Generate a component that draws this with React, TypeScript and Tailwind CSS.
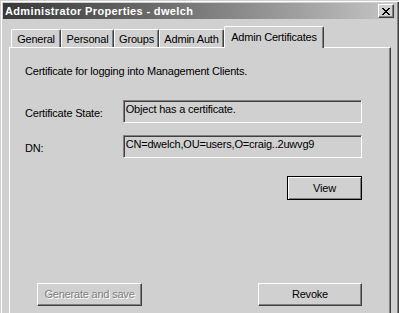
import React from "react";

const tabs = [
  { label: "General", w: "w-[50px]" },
  { label: "Personal", w: "w-[53px]" },
  { label: "Groups", w: "w-[45px]" },
  { label: "Admin Auth", w: "w-[65px]" },
];

function CloseGlyph() {
  return (
    <svg width="8" height="7" viewBox="0 0 8 7" shapeRendering="crispEdges">
      <path d="M0 0h2v1h-2zM6 0h2v1h-2zM1 1h2v1h-2zM5 1h2v1h-2zM2 2h4v1h-4zM3 3h2v1h-2zM2 4h4v1h-4zM1 5h2v1h-2zM5 5h2v1h-2zM0 6h2v1h-2zM6 6h2v1h-2z" fill="#000" />
    </svg>
  );
}

function Field({ children }: { children: React.ReactNode }) {
  return (
    <div className="w-[240px] h-[23px] border-t border-l border-t-[#808080] border-l-[#808080] border-b border-r border-b-white border-r-white shadow-[inset_1px_1px_0_#404040,inset_-1px_-1px_0_#d0d0d0] pl-[2px] pt-[2px] leading-[13px] text-black whitespace-nowrap overflow-hidden">
      {children}
    </div>
  );
}

export default function App() {
  return (
    <div className="w-[399px] h-[313px] overflow-hidden bg-[#d0d0d0] font-['Liberation_Sans',Arial,sans-serif] text-[11px] tracking-[-0.2px] text-black">
      <div className="w-[399px] h-[330px] bg-[#d0d0d0] p-[3px] shadow-[inset_1px_1px_0_#d0d0d0,inset_2px_2px_0_#ffffff,inset_-1px_-1px_0_#404040,inset_-2px_-2px_0_#808080] flex flex-col">
        {/* title bar */}
        <div className="h-[18px] flex items-center justify-between bg-gradient-to-r from-[#383838] to-[#c6c6c6] pl-[2px] pr-[2px]">
          <span className="text-white font-bold text-[11px] leading-[13px] tracking-[0.35px]">
            Administrator Properties - dwelch
          </span>
          <div className="w-[16px] h-[14px] bg-[#d0d0d0] flex items-center justify-center border-t border-l border-t-white border-l-white border-b border-r border-b-[#404040] border-r-[#404040] shadow-[inset_-1px_-1px_0_#808080]">
            <CloseGlyph />
          </div>
        </div>

        {/* tab control */}
        <div className="mt-[7px] ml-[6px] mr-[5px] flex flex-col">
          <div className="flex items-end h-[21px] pl-[2px]">
            {tabs.map((t) => (
              <div
                key={t.label}
                className={`${t.w} h-[18px] flex items-center justify-center border-t border-l border-t-white border-l-white border-r border-r-[#404040] shadow-[inset_-1px_0_0_#808080] rounded-tl-[2px] rounded-tr-[2px] leading-[13px] pt-px`}
              >
                {t.label}
              </div>
            ))}
            <div className="relative z-10 w-[100px] h-[22px] -mb-px bg-[#d0d0d0] flex items-center justify-center border-t border-l border-t-white border-l-white border-r border-r-[#404040] shadow-[inset_-1px_0_0_#808080] rounded-tl-[2px] rounded-tr-[2px] leading-[13px] pb-px">
              Admin Certificates
            </div>
          </div>

          {/* panel */}
          <div className="h-[280px] border-t border-l border-t-white border-l-white border-r border-r-[#404040] shadow-[inset_-1px_0_0_#808080] pt-[17px] pl-[15px] pr-[28px] flex flex-col">
            <p className="leading-[13px] whitespace-nowrap">Certificate for logging into Management Clients.</p>

            <div className="mt-[22px] flex items-center">
              <span className="w-[98px] leading-[13px] pt-[3px]">Certificate State:</span>
              <Field>Object has a certificate.</Field>
            </div>

            <div className="mt-[12px] flex items-center">
              <span className="w-[98px] leading-[13px] pt-[3px]">DN:</span>
              <Field>CN=dwelch,OU=users,O=craig..2uwvg9</Field>
            </div>

            <button className="mt-[18px] self-end w-[75px] h-[24px] border border-black bg-[#d0d0d0] shadow-[inset_1px_1px_0_#ffffff,inset_-1px_-1px_0_#808080] leading-[13px]">
              View
            </button>

            <div className="mt-[83px] flex justify-between">
              <button
                disabled
                className="ml-[12px] w-[105px] h-[23px] bg-[#d0d0d0] border-t border-l border-t-white border-l-white border-b border-r border-b-[#404040] border-r-[#404040] shadow-[inset_-1px_-1px_0_#808080] text-[#808080] [text-shadow:1px_1px_0_#ffffff] leading-[13px]"
              >
                Generate and save
              </button>
              <button className="w-[104px] h-[23px] bg-[#d0d0d0] border-t border-l border-t-white border-l-white border-b border-r border-b-[#404040] border-r-[#404040] shadow-[inset_-1px_-1px_0_#808080] leading-[13px]">
                Revoke
              </button>
            </div>
          </div>
        </div>
      </div>
    </div>
  );
}
